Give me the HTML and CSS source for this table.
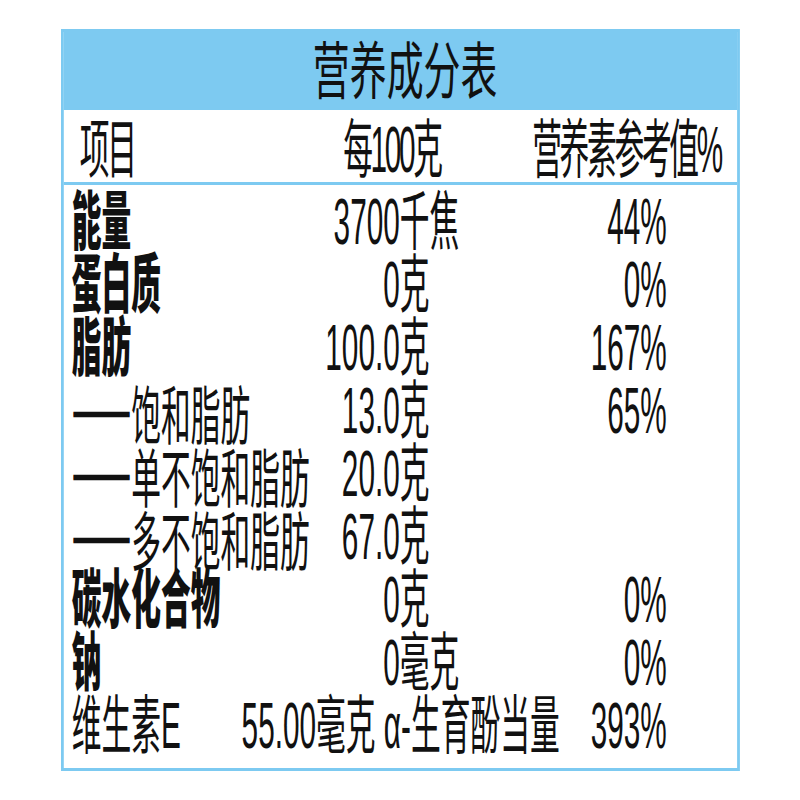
FILE: index.html
```html
<!DOCTYPE html>
<html lang="zh-CN">
<head>
<meta charset="utf-8">
<title>营养成分表</title>
<link rel="stylesheet" href="styles.css">
</head>
<body>
<div class="frame">
  <div class="panel">
    <div class="title"><span class="title-text">营养成分表</span></div>
    <div class="head">
      <span class="h-name">项目</span>
      <span class="h-per">每100克</span>
      <span class="h-nrv">营养素参考值%</span>
    </div>
    <div class="rows">
      <div class="row"><span class="name bold">能量</span><span class="num">3700</span><span class="unit">千焦</span><span class="pct">44%</span></div>
      <div class="row"><span class="name bold">蛋白质</span><span class="num">0</span><span class="unit">克</span><span class="pct">0%</span></div>
      <div class="row"><span class="name bold">脂肪</span><span class="num">100.0</span><span class="unit">克</span><span class="pct">167%</span></div>
      <div class="row"><span class="name"><span class="dash">——</span>饱和脂肪</span><span class="num">13.0</span><span class="unit">克</span><span class="pct">65%</span></div>
      <div class="row"><span class="name"><span class="dash">——</span>单不饱和脂肪</span><span class="num">20.0</span><span class="unit">克</span><span class="pct"></span></div>
      <div class="row"><span class="name"><span class="dash">——</span>多不饱和脂肪</span><span class="num">67.0</span><span class="unit">克</span><span class="pct"></span></div>
      <div class="row"><span class="name bold">碳水化合物</span><span class="num">0</span><span class="unit">克</span><span class="pct">0%</span></div>
      <div class="row"><span class="name bold">钠</span><span class="num">0</span><span class="unit">毫克</span><span class="pct">0%</span></div>
      <div class="row"><span class="name">维生素E</span><span class="wide">55.00毫克 α-生育酚当量</span><span class="pct">393%</span></div>
    </div>
  </div>
</div>
</body>
</html>
```
FILE: styles.css
```css
html, body {
  margin: 0;
  padding: 0;
  background: #ffffff;
}

.frame {
  margin: 29px 0 0 61px;
  width: 679px;
  overflow: hidden;
}

.panel {
  box-sizing: border-box;
  width: 1460.2px;
  border-style: solid;
  border-color: #7dcaf1;
  border-width: 3px 6.45px;
  transform: scaleX(0.465);
  transform-origin: 0 0;
  color: #111111;
  font-family: "Liberation Sans", "Noto Sans CJK SC", sans-serif;
  font-size: 64px;
  white-space: nowrap;
}

.title {
  background: #7dcaf1;
  text-align: center;
  font-family: "Noto Sans CJK SC", sans-serif;
  font-size: 62px;
  height: 78px;
  line-height: 71px;
  padding-left: 19px;
}

.title-text {
  display: inline-block;
  transform: scaleX(1.28);
}

.head,
.row {
  display: grid;
  grid-template-columns: 500px 222.6px 194px 380.2px 1fr;
  box-sizing: border-box;
}

.head {
  height: 75px;
  padding-top: 7.7px;
  line-height: 64.3px;
  letter-spacing: -5px;
  border-bottom: 3px solid #7dcaf1;
}

.h-name {
  padding-left: 34.4px;
}

.h-per {
  grid-column: 2 / 4;
  justify-self: end;
  margin-right: 106px;
}

.h-nrv {
  grid-column: 4 / 6;
  justify-self: end;
  margin-right: 35px;
}

.rows {
  padding: 3px 0 13px;
}

.row {
  height: 63px;
  padding-top: 5px;
  line-height: 58px;
}

.name {
  padding-left: 17.2px;
}

.bold {
  font-weight: 900;
}

.dash {
  font-family: "Noto Sans CJK SC", sans-serif;
  font-weight: 700;
  -webkit-text-stroke: 2.5px #111111;
}

.num {
  text-align: right;
}

.unit {
  text-align: left;
}

.pct {
  grid-column: 4;
  text-align: right;
}

.wide {
  grid-column: 2 / 4;
  justify-self: end;
  margin-right: -150px;
}
```
